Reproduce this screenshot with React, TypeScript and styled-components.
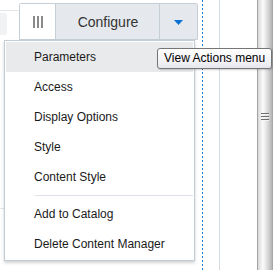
import React from "react";
import styled, { createGlobalStyle } from "styled-components";

const Global = createGlobalStyle`
  html, body { margin: 0; padding: 0; background: #ffffff; }
  body { font-family: "Liberation Sans", Arial, sans-serif; }
  * { box-sizing: border-box; }
`;

const Page = styled.div`
  position: relative;
  display: flex;
  width: 273px;
  height: 270px;
  overflow: hidden;
  background: #ffffff;
  font-family: "Liberation Sans", Arial, sans-serif;
`;

const Workspace = styled.div`
  position: relative;
  display: flex;
  width: 202px;
  height: 100%;
  flex: none;
`;

const LeftRail = styled.div`
  display: flex;
  flex-direction: column;
  width: 19px;
  flex: none;
  padding-top: 10px;
`;

const RailRule = styled.div<{ $w: number; $gap: number }>`
  width: ${(p) => p.$w}px;
  height: 1px;
  margin-top: ${(p) => p.$gap}px;
  background: #e3e7ea;
`;

const RailTab = styled.div`
  width: 7px;
  height: 22px;
  margin-top: 2px;
  background: #f1f2f3;
  border-radius: 0 3px 3px 0;
`;

const ToolbarArea = styled.div`
  flex: 1;
  padding-top: 3px;
`;

const ButtonGroup = styled.div`
  display: flex;
  width: 179px;
  height: 37px;
  border: 1px solid #c7cfd6;
  border-radius: 2px 2px 0 0;
`;

const Segment = styled.div<{ $w: number; $light?: boolean; $last?: boolean }>`
  display: flex;
  align-items: center;
  justify-content: center;
  width: ${(p) => p.$w}px;
  flex: none;
  background: ${(p) => (p.$light ? "#ffffff" : "#e5e9ed")};
  border-right: ${(p) => (p.$last ? "none" : "1px solid #c7cfd6")};
`;

const GripBars = styled.div`
  display: flex;
  gap: 2px;
  height: 12px;
  margin-top: 1px;
`;

const GripBar = styled.span`
  width: 2px;
  height: 100%;
  background: #8a8a8a;
`;

const ConfigureLabel = styled.span`
  font-size: 14px;
  color: #333333;
  line-height: 16px;
  padding-left: 1px;
`;

const Menu = styled.div`
  position: absolute;
  left: 4px;
  top: 40px;
  width: 191px;
  padding: 1px;
  background: #ffffff;
  border: 1px solid #c2cdd6;
  box-shadow: 0 2px 3px rgba(0, 0, 0, 0.18);
`;

const MenuItem = styled.div<{ $active?: boolean }>`
  height: 30px;
  line-height: 30px;
  padding-left: 28px;
  font-size: 12px;
  color: #1a1a1a;
  white-space: nowrap;
  background: ${(p) => (p.$active ? "#e8eaec" : "transparent")};
`;

const MenuSeparator = styled.div`
  height: 1px;
  margin: 3px 0 3px 29px;
  background: #dce2e7;
`;

const DottedGuide = styled.div`
  width: 1px;
  flex: none;
  height: 100%;
  background: repeating-linear-gradient(
    to bottom,
    #1f7bd6 0px,
    #1f7bd6 2px,
    transparent 2px,
    transparent 4px
  );
`;

const Gutter = styled.div<{ $w: number }>`
  width: ${(p) => p.$w}px;
  flex: none;
`;

const GuideLine = styled.div`
  width: 1px;
  flex: none;
  background: #d6dde3;
`;

const Scrollbar = styled.div`
  width: 16px;
  flex: none;
  height: 100%;
  border-left: 1px solid #a3a3a3;
  background: linear-gradient(
    to right,
    #d8d8d8 0px,
    #eeeeee 3px,
    #fbfbfb 5px,
    #e6e6e6 8px,
    #cfcfcf 11px,
    #b3b3b3 14px,
    #9a9a9a 15px
  );
  padding-top: 113px;
  padding-left: 3px;
`;

const ScrollGrip = styled.div`
  display: flex;
  flex-direction: column;
  gap: 1px;
  width: 8px;
`;

const ScrollGripLine = styled.span`
  display: block;
  height: 2px;
  background: linear-gradient(to bottom, #6f6f6f 0 1px, #f4f4f4 1px 2px);
`;

const Tooltip = styled.div`
  position: absolute;
  left: 157px;
  top: 48px;
  width: 115px;
  height: 21px;
  padding-left: 6px;
  border: 1px solid #767676;
  border-radius: 3px;
  background: linear-gradient(to bottom, #ffffff 0%, #f3f3f7 60%, #e6e6ee 100%);
  box-shadow: 1px 1px 2px rgba(0, 0, 0, 0.2);
  font-size: 12px;
  line-height: 19px;
  color: #000000;
  white-space: nowrap;
`;

const items = ["Parameters", "Access", "Display Options", "Style", "Content Style"];
const catalogItems = ["Add to Catalog", "Delete Content Manager"];

export default function App() {
  return (
    <>
      <Global />
      <Page>
        <Workspace>
          <LeftRail>
            <RailRule $w={19} $gap={0} />
            <RailTab />
            <RailRule $w={4} $gap={173} />
          </LeftRail>
          <ToolbarArea>
            <ButtonGroup>
              <Segment $w={36} $light>
                <GripBars>
                  <GripBar />
                  <GripBar />
                  <GripBar />
                </GripBars>
              </Segment>
              <Segment $w={104}>
                <ConfigureLabel>Configure</ConfigureLabel>
              </Segment>
              <Segment $w={37} $last>
                <svg width="9" height="5" viewBox="0 0 9 5" style={{ marginTop: 1 }}>
                  <polygon points="0,0 9,0 4.5,5" fill="#0a72d2" />
                </svg>
              </Segment>
            </ButtonGroup>
          </ToolbarArea>
          <Menu>
            {items.map((t, i) => (
              <MenuItem key={t} $active={i === 0}>
                {t}
              </MenuItem>
            ))}
            <MenuSeparator />
            {catalogItems.map((t) => (
              <MenuItem key={t}>{t}</MenuItem>
            ))}
          </Menu>
        </Workspace>
        <DottedGuide />
        <Gutter $w={16} />
        <GuideLine />
        <Gutter $w={37} />
        <Scrollbar>
          <ScrollGrip>
            <ScrollGripLine />
            <ScrollGripLine />
            <ScrollGripLine />
          </ScrollGrip>
        </Scrollbar>
        <Tooltip>View Actions menu</Tooltip>
      </Page>
    </>
  );
}
